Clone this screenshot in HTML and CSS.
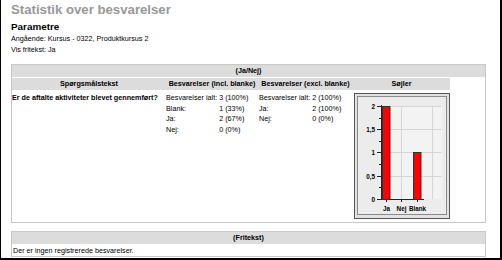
FILE: index.html
```html
<!DOCTYPE html>
<html>
<head>
    <title>Statistik over besvarelser</title>
    <link rel="stylesheet" href="styles.css">
</head>
<body>
    <div class="frame">
        <h1>Statistik over besvarelser</h1>
        <h2>Parametre</h2>
        <div class="params">
            <div>Angående: Kursus - 0322, Produktkursus 2</div>
            <div>Vis fritekst: Ja</div>
        </div>

        <table class="stat-table first-table">
            <colgroup>
                <col class="col-question">
                <col class="col-incl">
                <col class="col-excl">
                <col class="col-chart">
                <col>
            </colgroup>
            <tr>
                <th colspan="5" class="group-head">(Ja/Nej)</th>
            </tr>
            <tr class="col-head">
                <th>Spørgsmålstekst</th>
                <th>Besvarelser (incl. blanke)</th>
                <th>Besvarelser (excl. blanke)</th>
                <th>Søjler</th>
                <th class="blank-head"></th>
            </tr>
            <tr class="data-row">
                <td class="question">Er de aftalte aktiviteter blevet gennemført?</td>
                <td>
                    <div class="stats">
                        <span>Besvarelser ialt:</span><span>3 (100%)</span>
                        <span>Blank:</span><span>1 (33%)</span>
                        <span>Ja:</span><span>2 (67%)</span>
                        <span>Nej:</span><span>0 (0%)</span>
                    </div>
                </td>
                <td class="excl">
                    <div class="stats">
                        <span>Besvarelser ialt:</span><span>2 (100%)</span>
                        <span>Ja:</span><span>2 (100%)</span>
                        <span>Nej:</span><span>0 (0%)</span>
                    </div>
                </td>
                <td class="chart-cell">
                    <svg class="chart" width="96" height="126" viewBox="0 0 96 126">
                        <rect x="0.5" y="0.5" width="95" height="125" fill="#e2e2e2" stroke="#555"/>
                        <rect x="3.5" y="3.5" width="89" height="118" fill="#ececec" stroke="#8a8a8a"/>
                        <rect x="27" y="13" width="61" height="93" fill="#f3f3f3"/>
                        <g stroke="#d6d6d6" stroke-width="1">
                            <line x1="27" y1="13.5" x2="88" y2="13.5"/>
                            <line x1="27" y1="36.5" x2="88" y2="36.5"/>
                            <line x1="27" y1="59.5" x2="88" y2="59.5"/>
                            <line x1="27" y1="83.5" x2="88" y2="83.5"/>
                            <line x1="47.5" y1="13" x2="47.5" y2="106"/>
                            <line x1="78.5" y1="13" x2="78.5" y2="106"/>
                        </g>
                        <g stroke="#222" stroke-width="1">
                            <line x1="27.5" y1="12" x2="27.5" y2="107"/>
                            <line x1="23" y1="13.5" x2="28" y2="13.5"/>
                            <line x1="23" y1="36.5" x2="28" y2="36.5"/>
                            <line x1="23" y1="59.5" x2="28" y2="59.5"/>
                            <line x1="23" y1="83.5" x2="28" y2="83.5"/>
                            <line x1="23" y1="106.5" x2="28" y2="106.5"/>
                            <line x1="25" y1="25.5" x2="28" y2="25.5"/>
                            <line x1="25" y1="48.5" x2="28" y2="48.5"/>
                            <line x1="25" y1="71.5" x2="28" y2="71.5"/>
                            <line x1="25" y1="94.5" x2="28" y2="94.5"/>
                            <line x1="27" y1="106.5" x2="70" y2="106.5"/>
                            <line x1="32.5" y1="106" x2="32.5" y2="109"/>
                            <line x1="47.5" y1="106" x2="47.5" y2="109"/>
                            <line x1="63.5" y1="106" x2="63.5" y2="109"/>
                        </g>
                        <rect x="28.5" y="13.5" width="7.5" height="93" fill="#ff0000" stroke="#333"/>
                        <rect x="59.5" y="59.5" width="7.5" height="47" fill="#ff0000" stroke="#333"/>
                        <g class="axis-label" text-anchor="end">
                            <text x="21" y="15.5">2</text>
                            <text x="21" y="38.5">1,5</text>
                            <text x="21" y="61.5">1</text>
                            <text x="21" y="85.5">0,5</text>
                            <text x="21" y="108.5">0</text>
                        </g>
                        <g class="axis-label" text-anchor="middle">
                            <text x="32.5" y="118">Ja</text>
                            <text x="47.5" y="118">Nej</text>
                            <text x="63.5" y="118">Blank</text>
                        </g>
                    </svg>
                </td>
                <td></td>
            </tr>
        </table>

        <table class="stat-table text-table">
            <tr>
                <th class="group-head">(Fritekst)</th>
            </tr>
            <tr>
                <td class="empty-text">Der er ingen registrerede besvarelser.</td>
            </tr>
        </table>
    </div>
</body>
</html>
```

FILE: styles.css
```css
body {
    margin: 0;
    padding: 0;
    font-family: 'Liberation Sans', Arial, sans-serif;
    font-size: 7.2px;
    color: #000;
    background-color: white;
}
.frame {
    box-sizing: border-box;
    width: 502px;
    height: 260px;
    padding: 2px 0 0 10px;
    border-left: 1px solid #000;
    border-right: 2px solid #000;
    border-bottom: 2px solid #000;
    overflow: hidden;
}
h1 {
    margin: 0;
    font-size: 13.2px;
    line-height: 15px;
    color: #999;
}
h2 {
    margin: 4px 0 0 0;
    font-size: 9.9px;
    line-height: 11px;
}
.params {
    margin-top: 1px;
    line-height: 11px;
}
.stat-table {
    width: 475px;
    margin-top: 8px;
    border: 1px solid #c8c8c8;
    border-spacing: 0;
    table-layout: fixed;
}
.first-table {
    margin-top: 9px;
}
.col-question {
    width: 154px;
}
.col-incl {
    width: 92px;
}
.col-excl {
    width: 95px;
}
.col-chart {
    width: 97px;
}
th, td {
    padding: 0;
    vertical-align: top;
}
.group-head {
    height: 12px;
    line-height: 12px;
    background-color: #dcdcdc;
    border-bottom: 1px solid #fff;
    text-align: center;
}
.col-head th {
    height: 12px;
    line-height: 12px;
    background-color: #dcdcdc;
    text-align: center;
    white-space: nowrap;
}
.col-head .blank-head {
    background-color: white;
}
.data-row td {
    padding-top: 3px;
    line-height: 10.6px;
}
.question {
    font-weight: bold;
    white-space: nowrap;
}
.excl {
    padding-left: 1px;
}
.stats {
    display: grid;
    grid-template-columns: auto 1fr;
    column-gap: 2px;
}
.chart-cell {
    padding-bottom: 3px;
}
.chart {
    display: block;
    margin-left: 1px;
}
.axis-label {
    font-family: 'Liberation Sans', Arial, sans-serif;
    font-size: 6.3px;
    font-weight: bold;
    fill: #000;
}
.text-table {
    table-layout: auto;
}
.empty-text {
    padding: 1px 1px 0 1px;
    line-height: 10px;
}
```
